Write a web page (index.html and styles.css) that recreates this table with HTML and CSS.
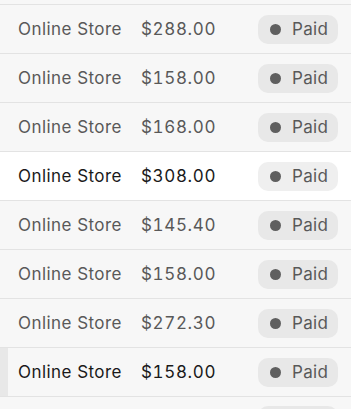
FILE: index.html
```html
<!DOCTYPE html>
<html>
<head>
<meta charset="utf-8">
<link rel="stylesheet" href="styles.css">
</head>
<body>
<div class="list">
  <div class="row"><span class="name">Online Store</span><span class="amount">$288.00</span><span class="badge"><span class="dot"></span>Paid</span></div>
  <div class="row"><span class="name">Online Store</span><span class="amount">$158.00</span><span class="badge"><span class="dot"></span>Paid</span></div>
  <div class="row"><span class="name">Online Store</span><span class="amount">$168.00</span><span class="badge"><span class="dot"></span>Paid</span></div>
  <div class="row hover"><span class="name">Online Store</span><span class="amount">$308.00</span><span class="badge"><span class="dot"></span>Paid</span></div>
  <div class="row"><span class="name">Online Store</span><span class="amount">$145.40</span><span class="badge"><span class="dot"></span>Paid</span></div>
  <div class="row"><span class="name">Online Store</span><span class="amount">$158.00</span><span class="badge"><span class="dot"></span>Paid</span></div>
  <div class="row"><span class="name">Online Store</span><span class="amount">$272.30</span><span class="badge"><span class="dot"></span>Paid</span></div>
  <div class="row selected"><span class="name">Online Store</span><span class="amount">$158.00</span><span class="badge"><span class="dot"></span>Paid</span></div>
  <div class="row last"><span class="badge-stub"></span></div>
</div>
</body>
</html>
```
FILE: styles.css
```css
html, body {
  margin: 0;
  padding: 0;
  background: #f7f7f7;
  overflow: hidden;
  height: 409px;
}
body {
  font-family: Inter, "Noto Sans", sans-serif;
  font-size: 17px;
  letter-spacing: 0.45px;
}
.list {
  margin-top: 4px;
  border-top: 1px solid #e3e3e3;
}
.row {
  height: 48px;
  border-bottom: 1px solid #e3e3e3;
  background: #f7f7f7;
  display: grid;
  grid-template-columns: 123px 117px auto;
  align-items: center;
  padding-left: 18px;
  color: #595959;
}
.row.hover {
  background: #ffffff;
  color: #1a1a1a;
}
.row.selected {
  color: #1a1a1a;
  box-shadow: inset 8px 0 0 #e8e8e8;
}
.name, .amount {
  white-space: nowrap;
}
.amount {
  font-variant-numeric: tabular-nums;
  letter-spacing: 0.65px;
}
.badge {
  justify-self: start;
  display: inline-flex;
  align-items: center;
  gap: 11px;
  height: 29px;
  width: 80px;
  box-sizing: border-box;
  padding-left: 12px;
  border-radius: 10px;
  background: #e8e8e8;
  color: #595959;
  letter-spacing: 0.3px;
}
.row.hover .badge {
  background: #efefef;
}
.dot {
  width: 11px;
  height: 11px;
  border-radius: 50%;
  background: #5f5f5f;
  flex: none;
}
.row.last {
  align-items: start;
}
.badge-stub {
  grid-column: 3;
  margin-top: 9px;
  width: 80px;
  height: 29px;
  border-radius: 10px;
  background: #e8e8e8;
}
```
